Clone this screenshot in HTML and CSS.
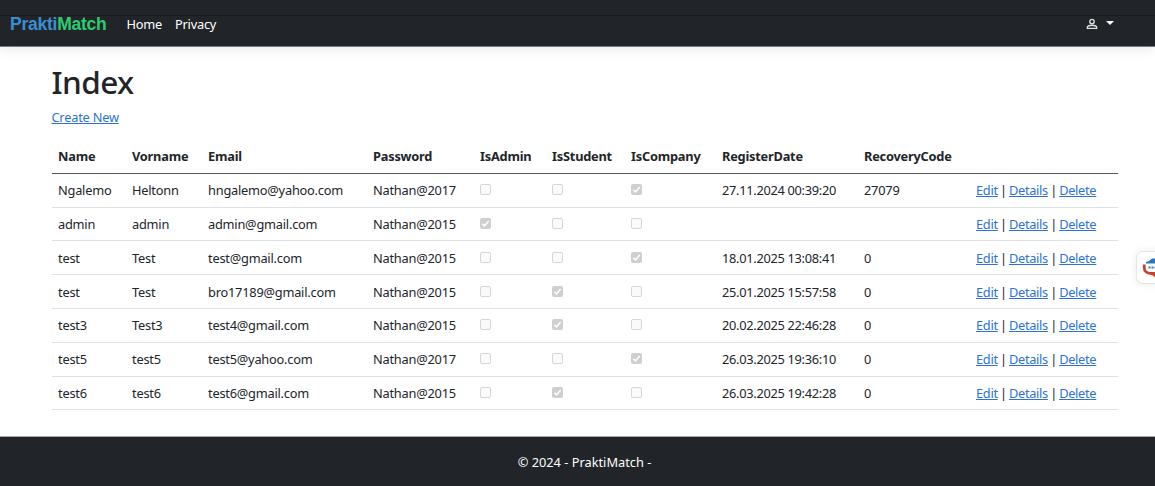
FILE: index.html
```
<!DOCTYPE html>
<html lang="en">
<head>
<meta charset="utf-8">
<title>Index - PraktiMatch</title>
<link rel="stylesheet" href="styles.css">
</head>
<body>
<header class="navbar">
  <a class="brand"><span class="brand-a">Prakti</span><span class="brand-b">Match</span></a>
  <nav class="links"><a>Home</a><a>Privacy</a></nav>
  <div class="account">
    <svg class="person" viewBox="0 0 12 12" fill="none" stroke="currentColor" stroke-width="1.4"><circle cx="6" cy="3.600" r="2.200"/><path d="M1.300 10.400V9.600C1.300 7.800 3 7.200 6 7.200s4.700.600 4.700 2.400v.800z"/></svg>
    <span class="caret"></span>
  </div>
</header>
<main class="content">
  <h1 class="title">Index</h1>
  <p class="create"><a class="link">Create New</a></p>
  <table class="table">
    <colgroup><col class="c-name"><col class="c-vor"><col class="c-mail"><col class="c-pass"><col class="c-admin"><col class="c-stud"><col class="c-comp"><col class="c-date"><col class="c-code"><col class="c-act"></colgroup>
    <thead><tr><th>Name</th><th>Vorname</th><th>Email</th><th>Password</th><th>IsAdmin</th><th>IsStudent</th><th>IsCompany</th><th>RegisterDate</th><th>RecoveryCode</th><th></th></tr></thead>
    <tbody id="rows"></tbody>
  </table>
</main>
<footer class="footer">© 2024 - PraktiMatch -</footer>
<div class="widget">
  <svg class="widget-icon" viewBox="0 0 24 24"><path d="M5 8.500V7l3-1 3-2.500h8v5z" fill="#2878bd"/><path d="M3.200 9.500v3c0 4 3 6 7 6h8" fill="none" stroke="#c8412f" stroke-width="2.800"/><path d="M9 18.500h6V23z" fill="#c8412f"/><path d="M7.500 12.500h9" stroke="#2878bd" stroke-width="1.800" stroke-dasharray="2 1"/></svg>
</div>
<script src="rows.js"></script>
</body>
</html>
```
FILE: rows.js
```
const users = [
  ["Ngalemo", "Heltonn", "hngalemo@yahoo.com", "Nathan@2017", "company", "27.11.2024 00:39:20", "27079"],
  ["admin", "admin", "admin@gmail.com", "Nathan@2015", "admin", "", ""],
  ["test", "Test", "test@gmail.com", "Nathan@2015", "company", "18.01.2025 13:08:41", "0"],
  ["test", "Test", "bro17189@gmail.com", "Nathan@2015", "student", "25.01.2025 15:57:58", "0"],
  ["test3", "Test3", "test4@gmail.com", "Nathan@2015", "student", "20.02.2025 22:46:28", "0"],
  ["test5", "test5", "test5@yahoo.com", "Nathan@2017", "company", "26.03.2025 19:36:10", "0"],
  ["test6", "test6", "test6@gmail.com", "Nathan@2015", "student", "26.03.2025 19:42:28", "0"]
];
const cell = text => `<td>${text}</td>`;
const box = on => `<td><span class="check${on ? " on" : ""}">${on ? '<svg viewBox="0 0 11 11"><path d="M2.300 5.700L4.500 7.900L8.700 3" fill="none" stroke="#fff" stroke-width="1.500"/></svg>' : ""}</span></td>`;
document.getElementById("rows").innerHTML = users.map(u =>
  "<tr>" + u.slice(0, 4).map(cell).join("") +
  ["admin", "student", "company"].map(r => box(u[4] === r)).join("") +
  u.slice(5).map(cell).join("") +
  '<td class="actions"><a class="link">Edit</a> | <a class="link">Details</a> | <a class="link">Delete</a></td></tr>').join("");
```
FILE: styles.css
```
* { box-sizing: border-box; }
body { margin: 0; height: 486px; overflow: hidden; display: flex; flex-direction: column; background: #fff; color: #212529; font-family: "Noto Sans", "Open Sans", sans-serif; font-size: 12.8px; line-height: 20px; letter-spacing: -.22px; position: relative; }
.navbar { height: 46px; flex: none; display: flex; align-items: center; padding: 2px 41.5px 0 10px; background: linear-gradient(#212529 15px, #171b20 15px, #171b20 16px, #212529 16px); color: #fff; box-shadow: 0 1px 0 #777b80, 0 3px 12px rgba(0,0,0,.09); }
.brand { width: 116.5px; font: bold 17.5px/20px "Liberation Sans", Arial, sans-serif; letter-spacing: -.25px; padding-bottom: 1px; }
.brand-a { color: #3a8fd4; }
.brand-b { color: #2ecc71; }
.links { display: flex; gap: 13px; }
.account { margin-left: auto; display: flex; align-items: center; gap: 8px; }
.person { width: 12px; height: 12px; color: #ddd; }
.caret { border: 4px solid transparent; border-top-color: #fff; border-bottom: 0; margin-bottom: 2px; }
.content { flex: 1; padding: 16px 37.5px 0 51.5px; }
.title { margin: 0 0 5px; font-size: 31.5px; line-height: 40px; font-weight: 500; letter-spacing: -.6px; }
.create { margin: 0 0 13px; }
.link { color: #2b73d8; text-decoration: underline; }
.table { width: 1066px; table-layout: fixed; border-collapse: separate; border-spacing: 0; }
.c-name { width: 74px; } .c-vor { width: 76px; } .c-mail { width: 165px; } .c-pass { width: 107px; } .c-admin { width: 72px; }
.c-stud { width: 79px; } .c-comp { width: 91px; } .c-date { width: 142px; } .c-code { width: 112px; } .c-act { width: 148px; }
th, td { height: 33.8px; padding: 0 0 0 6.5px; text-align: left; white-space: nowrap; border-bottom: 1px solid #dee2e6; }
td:nth-child(8) { letter-spacing: -.29px; }
th { border-bottom-color: #55585c; font-weight: 700; }
td.actions { word-spacing: -.8px; letter-spacing: -.3px; }
.check { display: block; width: 11px; height: 11px; margin-bottom: 1px; border: 1px solid #d6d6d6; border-radius: 2px; background: #fafafa; }
.check.on { border: 0; background: #cfcfcf; }
.check svg { display: block; width: 11px; height: 11px; }
.footer { flex: none; height: 49px; display: flex; align-items: center; justify-content: center; padding: 0 0 0 14px; background: #212529; color: #fff; letter-spacing: 0; box-shadow: 0 -1px 0 #a5a7a9; }
.widget { position: absolute; left: 1136px; top: 251px; width: 40px; height: 33px; padding: 3px 4px; border: 1px solid #e2e7ec; border-radius: 7px; background: #fff; box-shadow: 0 0 8px rgba(0,0,0,.08); }
.widget-icon { display: block; width: 24px; height: 24px; }
```
